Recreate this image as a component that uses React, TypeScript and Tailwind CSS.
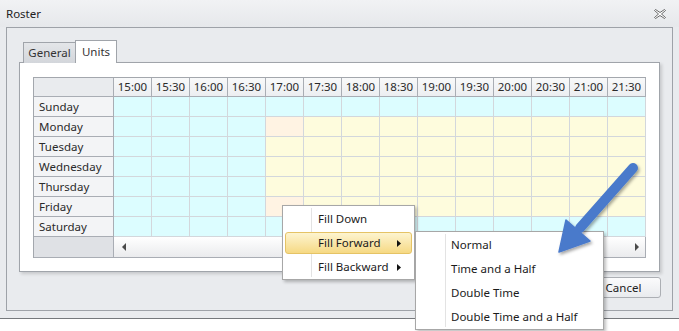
import React from "react";

const times = [
  "15:00", "15:30", "16:00", "16:30", "17:00", "17:30", "18:00",
  "18:30", "19:00", "19:30", "20:00", "20:30", "21:00", "21:30",
];
const days = ["Sunday", "Monday", "Tuesday", "Wednesday", "Thursday", "Friday", "Saturday"];

const cellColors = {
  cyan: "bg-[#dcfdff]",
  yellow: "bg-[#fefcdd]",
  peach: "bg-[#fff3e3]",
};

function cellColor(day: number, col: number) {
  if (day === 0 || day === 6 || col < 4) return cellColors.cyan;
  if (col === 4 && (day === 1 || day === 5)) return cellColors.peach;
  return cellColors.yellow;
}

function SubArrow() {
  return (
    <svg width="4" height="7" viewBox="0 0 4 7" className="block">
      <path d="M0 0 L4 3.5 L0 7 Z" fill="#111" />
    </svg>
  );
}

function MenuItem({ label, active, sub }: { label: string; active?: boolean; sub?: boolean }) {
  return (
    <div
      className={
        "relative flex items-center h-[22px] mx-[2px] rounded-[3px] border " +
        (active
          ? "border-[#e5c365] bg-linear-to-b from-[#fdf4cf] to-[#f6d983]"
          : "border-transparent")
      }
    >
      <span className="pl-[32px] text-[11.5px] text-[#1b1b1b] flex-1">{label}</span>
      {sub && (
        <span className="mr-[10px]">
          <SubArrow />
        </span>
      )}
    </div>
  );
}

function RosterGrid() {
  return (
    <div className="grid grid-cols-[80px_repeat(14,38px)] border-l border-t border-[#a3a7ad] w-max">
      {/* header */}
      <div className="h-[19px] border-r border-b border-[#a9adb4] bg-[#e9ebee]" />
      {times.map((t) => (
        <div
          key={t}
          className="h-[19px] border-r border-b border-[#a9adb4] bg-linear-to-b from-[#f8f9fa] to-[#eceef1] flex items-center justify-center text-[11.5px] text-[#2a2a2a]"
        >
          {t}
        </div>
      ))}
      {days.map((d, di) => (
        <React.Fragment key={d}>
          <div className="h-[20px] border-r border-b border-[#a9adb4] bg-[#f3f4f6] flex items-center pl-[5px] text-[11.5px] text-[#2a2a2a]">
            {d}
          </div>
          {times.map((t, ci) => (
            <div
              key={t}
              className={"h-[20px] border-r border-b border-[#d3d7dc] " + cellColor(di, ci)}
            />
          ))}
        </React.Fragment>
      ))}
      {/* scroll row */}
      <div className="h-[21px] border-r border-b border-[#a9adb4] bg-[#dfe1e5]" />
      <div className="col-span-14 h-[21px] border-r border-b border-[#a9adb4] bg-linear-to-b from-white to-[#eaebed] flex items-center justify-between pl-[8px] pr-[6px]">
        <svg width="4" height="8" viewBox="0 0 4 8" className="block">
          <path d="M4 0 L0 4 L4 8 Z" fill="#4a4a4a" />
        </svg>
        <svg width="4" height="8" viewBox="0 0 4 8" className="block">
          <path d="M0 0 L4 4 L0 8 Z" fill="#4a4a4a" />
        </svg>
      </div>
    </div>
  );
}

export default function App() {
  return (
    <div
      className="relative w-[679px] h-[331px] bg-white overflow-hidden"
      style={{ fontFamily: '"Noto Sans", "Segoe UI", sans-serif' }}
    >
      <div className="h-[319px] bg-[#e9ebee] border-b border-[#75787c] flex flex-col">
        {/* title bar */}
        <div className="h-[27px] flex items-center justify-between pl-[6px] pr-[13px] bg-linear-to-b from-[#f1f2f4] to-[#e6e8eb]">
          <span className="text-[11.5px] text-[#222]">Roster</span>
          <svg width="12" height="10" viewBox="0 0 12 10" className="block">
            <path
              d="M0.5 1.5 L1.5 0.5 L6 3.5 L10.5 0.5 L11.5 1.5 L7.5 5 L11.5 8.5 L10.5 9.5 L6 6.5 L1.5 9.5 L0.5 8.5 L4.5 5 Z"
              fill="#fff"
              stroke="#5a5a5a"
              strokeWidth="0.9"
            />
          </svg>
        </div>

        {/* frame */}
        <div className="mx-[6px] h-[284px] border border-[#9ea2a8] px-[12px] pt-[12px]">
          {/* tabs */}
          <div className="relative z-10 flex items-end h-[23px] pl-[4px]">
            <div className="h-[21px] w-[52px] border border-r-0 border-b-0 border-[#a0a4aa] bg-linear-to-b from-[#e4e6e9] to-[#d3d6db] flex items-center justify-center text-[11.5px] text-[#333]">
              General
            </div>
            <div className="h-[23px] w-[42px] border border-b-0 border-[#a0a4aa] bg-white flex items-center justify-center text-[11.5px] text-[#333] pb-[1px]">
              Units
            </div>
          </div>

          {/* tab page */}
          <div className="-mt-[1px] h-[210px] bg-white border border-[#a0a4aa] shadow-[2px_2px_3px_rgba(0,0,0,0.15)] pl-[13px] pt-[14px]">
            <RosterGrid />
          </div>

          {/* buttons */}
          <div className="flex justify-end mt-[5px] -mr-[1px]">
            <div className="h-[21px] w-[75px] rounded-[3px] border border-[#acafb4] bg-linear-to-b from-[#fbfbfc] to-[#e9ebee] flex items-center justify-center text-[11.5px] text-[#222]">
              Cancel
            </div>
          </div>
        </div>
      </div>

      {/* context menu */}
      <div className="absolute left-[282px] top-[205px] w-[133px] bg-white border border-[#a7a7a7] shadow-[2px_2px_3px_rgba(0,0,0,0.25)] pt-[2px] pb-[1px] flex flex-col gap-[2px]">
        <div className="absolute left-[28px] top-[2px] bottom-[2px] w-px bg-[#e3e3e3]" />
        <MenuItem label="Fill Down" />
        <MenuItem label="Fill Forward" active sub />
        <MenuItem label="Fill Backward" sub />
      </div>

      {/* sub menu */}
      <div className="absolute left-[415px] top-[231px] w-[189px] bg-white border border-[#a7a7a7] shadow-[2px_2px_3px_rgba(0,0,0,0.25)] pt-[2px] pb-[1px] flex flex-col gap-[2px]">
        <div className="absolute left-[29px] top-[2px] bottom-[2px] w-px bg-[#e3e3e3]" />
        {["Normal", "Time and a Half", "Double Time", "Double Time and a Half"].map((l) => (
          <MenuItem key={l} label={l} />
        ))}
      </div>

      {/* callout arrow */}
      <svg
        className="absolute left-0 top-0 pointer-events-none"
        width="679"
        height="331"
        viewBox="0 0 679 331"
      >
        <defs>
          <filter id="sh" x="-20%" y="-20%" width="140%" height="140%">
            <feDropShadow dx="1.5" dy="2" stdDeviation="1.5" floodColor="#000" floodOpacity="0.35" />
          </filter>
        </defs>
        <g filter="url(#sh)">
          <line x1="633" y1="168" x2="580" y2="228" stroke="#4a7acb" strokeWidth="10" strokeLinecap="round" />
          <path d="M566 220 L590 241 L559 252 Z" fill="#4a7acb" stroke="#4a7acb" strokeWidth="1.5" strokeLinejoin="round" />
        </g>
      </svg>
    </div>
  );
}
